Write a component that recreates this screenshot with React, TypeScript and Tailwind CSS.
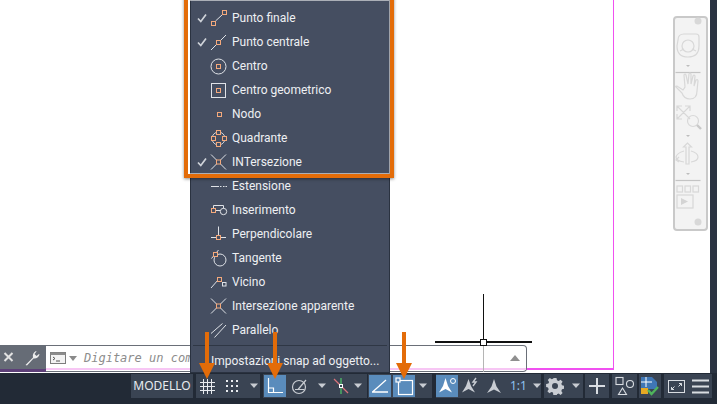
import React from 'react';

const white = '#dfe2e7';
const snap = '#f4a97c';

// small orange marker used by the snap icons
const Mark = ({ x, y, fill = 'none' }: { x: number; y: number; fill?: string }) => (
  <rect x={x} y={y} width="4" height="4" fill={fill} stroke={snap} />
);

const menuIcons: Record<string, React.ReactNode> = {
  endpoint: (
    <>
      <path d="M6.500 15 13.500 8.500" stroke={white} />
      <Mark x={2.5} y={15.5} />
      <Mark x={13.5} y={4.5} />
    </>
  ),
  midpoint: (
    <>
      <path d="M2 20 17 5" stroke={white} />
      <Mark x={7.5} y={10.5} fill="#454e61" />
    </>
  ),
  center: (
    <>
      <circle cx="9.500" cy="12.500" r="7.500" fill="none" stroke={white} />
      <Mark x={7.5} y={10.5} />
    </>
  ),
  centroid: (
    <>
      <rect x="2.500" y="5.500" width="14" height="14" fill="none" stroke={white} />
      <Mark x={7.5} y={10.5} />
    </>
  ),
  node: <Mark x={8.5} y={10.5} />,
  quadrant: (
    <>
      <circle cx="9.500" cy="12.500" r="6.500" fill="none" stroke="#c9ced6" />
      <Mark x={7.5} y={4.5} fill="#454e61" />
      <Mark x={7.5} y={16.5} fill="#454e61" />
      <Mark x={2.5} y={10.5} fill="#454e61" />
      <Mark x={13.5} y={10.5} fill="#454e61" />
    </>
  ),
  intersection: (
    <>
      <path d="M2 4.500 17 19.500M17 4.500 2 19.500" stroke={white} />
      <Mark x={7.5} y={10} fill="#454e61" />
    </>
  ),
  extension: (
    <path d="M2 12.500h8M11 12.500h1.500M14 12.500h1.500M16.500 12.500h1.500" stroke={white} />
  ),
  insertion: (
    <>
      <path d="M4.500 10.500V7.500h10v3M7 12.500h4" stroke={white} fill="none" />
      <circle cx="14.500" cy="13.500" r="3.200" fill="none" stroke={white} />
      <Mark x={2.5} y={10.5} fill="#454e61" />
    </>
  ),
  perpendicular: (
    <>
      <path d="M9.500 4.500V13M2 15.500h15" stroke={white} />
      <Mark x={7.5} y={13.5} fill="#454e61" />
    </>
  ),
  tangent: (
    <>
      <circle cx="11" cy="14" r="6" fill="none" stroke={white} />
      <path d="M2.500 12.500 9.500 4" stroke={white} />
      <Mark x={4.5} y={6.5} fill="#454e61" />
    </>
  ),
  nearest: (
    <>
      <path d="M2 18 9 10M12 11l2 2" stroke={white} />
      <Mark x={8.5} y={7.5} fill="#454e61" />
      <rect x="13.500" y="12.500" width="3.500" height="3.500" fill="none" stroke={white} />
    </>
  ),
  apparent: (
    <>
      <path d="M2 4.500 17 19.500M17 4.500 2 19.500" stroke={white} />
      <Mark x={7.5} y={10} fill="#454e61" />
    </>
  ),
  parallel: <path d="M2 15.500 13.500 5.500M5.500 19.500 17 7" stroke={white} />,
};

const menuRows = [
  { label: 'Punto finale', icon: 'endpoint', checked: true },
  { label: 'Punto centrale', icon: 'midpoint', checked: true },
  { label: 'Centro', icon: 'center' },
  { label: 'Centro geometrico', icon: 'centroid' },
  { label: 'Nodo', icon: 'node' },
  { label: 'Quadrante', icon: 'quadrant' },
  { label: 'INTersezione', icon: 'intersection', checked: true },
  { label: 'Estensione', icon: 'extension' },
  { label: 'Inserimento', icon: 'insertion' },
  { label: 'Perpendicolare', icon: 'perpendicular' },
  { label: 'Tangente', icon: 'tangent' },
  { label: 'Vicino', icon: 'nearest' },
  { label: 'Intersezione apparente', icon: 'apparent' },
  { label: 'Parallelo', icon: 'parallel' },
];

function Caret() {
  return (
    <svg width="10" height="6" viewBox="0 0 10 6">
      <path d="M1 0.500h8L5 5z" fill="#c8ccd2" />
    </svg>
  );
}

function SnapMenu() {
  return (
    <div className="absolute left-[190px] top-0 w-[200px] h-[373px] bg-[#454e61] border-x border-b border-[#2a3240] pt-[6px] flex flex-col font-['Roboto',sans-serif] text-[12px] text-[#eef0f3]">
      {menuRows.map((row) => (
        <div key={row.label} className="h-[24px] shrink-0 flex items-center">
          <div className="w-[18px] pl-[6px] shrink-0">
            {row.checked && (
              <svg width="10" height="10" viewBox="0 0 10 10">
                <path d="M1 5.500 3.800 8.500 9 1.500" fill="none" stroke="#cfd3d9" strokeWidth="1.700" />
              </svg>
            )}
          </div>
          <svg width="20" height="24" viewBox="0 0 20 24" className="shrink-0">
            {menuIcons[row.icon]}
          </svg>
          <span className="ml-[3px] whitespace-nowrap">{row.label}</span>
        </div>
      ))}
      <div className="mx-[2px] mt-[3px] border-t border-[#2f3745]" />
      <div className="pl-[20px] pt-[6px] whitespace-nowrap">Impostazioni snap ad oggetto...</div>
    </div>
  );
}

function Highlight() {
  return (
    <div className="absolute left-[184px] top-[-4px] w-[210px] h-[182px] border-4 border-[#e36c09] shadow-[0_1px_3px_rgba(0,0,0,0.45),inset_0_0_0_1px_rgba(255,255,255,0.55)]" />
  );
}

function OrangeArrow({ className }: { className: string }) {
  return (
    <svg width="16" height="48" viewBox="0 0 16 48" className={`absolute top-[332px] ${className}`}>
      <path d="M6 0h4v31h6L8 47 0 31h6z" fill="#e36c09" />
    </svg>
  );
}

function NavBar() {
  return (
    <div className="absolute left-[673px] top-[16px] w-[35px] h-[215px] rounded-[4px] bg-[#f3f3f3] border-2 border-[#c9c9c9]">
      <svg width="35" height="215" viewBox="2 2 35 215" fill="none" stroke="#d8d8d8" strokeWidth="1.200" className="block -mt-[2px] -ml-[2px]">
        <circle cx="27" cy="7" r="3.500" fill="#d8d8d8" stroke="none" />
        <path d="M7 26q0-6 6-6h12q3 0 3 3v9q0 11-11 11T6 32z" />
        <circle cx="17" cy="32" r="6" />
        <path d="M9 37l4-2M25 37l-4-2" />
        <path d="M15 51h4l-2 2z" fill="#bdbdbd" stroke="none" />
        <path d="M4.500 58.500h25" stroke="#c4c4c4" />
        <path d="M5 73l6 6q2 6 8 6 7 0 7-8l1-10q0-2-2-1l-2 6 1-10q-1-2-2 0l-2 8 0-10q-1-2-2 0l-1 10-2-9q-1-2-2 0l1 12-2 3-6-4q-2 0-1 1z" />
        <path d="M6 92l13 13M19 92 6 105M6 97v-5h5M19 97v-5h-5M6 100v5h5" />
        <circle cx="22" cy="107" r="5.500" />
        <path d="M26 111l4 4" strokeWidth="2.400" stroke="#c8c8c8" />
        <path d="M15 121h4l-2 2z" fill="#bdbdbd" stroke="none" />
        <path d="M15 150v-17h-2.500l4-4 4 4H18v17z" />
        <path d="M13 137q-7 2-8 6 0 4 8 5M20 137q7 2 7 6 0 4-7 5" />
        <path d="M8 143l-3 3 3 2" />
        <path d="M15 159h4l-2 2z" fill="#bdbdbd" stroke="none" />
        <path d="M4.500 166.500h25" stroke="#c4c4c4" />
        <rect x="6" y="172" width="5.500" height="6" />
        <rect x="14" y="172" width="5.500" height="6" />
        <rect x="22" y="172" width="5.500" height="6" />
        <rect x="6" y="181" width="16" height="13" />
        <path d="M10 184v7l7-3.500z" fill="#d4d4d4" stroke="none" />
        <circle cx="27" cy="208" r="3.500" fill="#d8d8d8" stroke="none" />
      </svg>
    </div>
  );
}

function CommandLine() {
  return (
    <div className="absolute left-0 bottom-[1px] w-[527px] h-[27px] flex">
      <div className="w-[46px] shrink-0 bg-[#666c76] border-b-[3px] border-[#5d3f78] flex items-start pt-[5px] pl-[3px] gap-[10px] text-[#e8e8e8]">
        <svg width="11" height="14" viewBox="0 0 11 14">
          <path d="M1.500 3l8 8M9.500 3l-8 8" stroke="#e2e2e2" strokeWidth="2" />
        </svg>
        <svg width="16" height="16" viewBox="0 0 16 16">
          <path d="M1.500 15 9 7.500Q8 3 12 1l.5.500-2 2.500 2 2 2.500-2 .5.500Q14 9 9.500 8.500L3 15.500z" fill="#eeeeee" />
        </svg>
      </div>
      <div className="flex-1 rounded-r-[4px] border-y border-r border-[#6a6f78] bg-white/70 relative flex items-start pt-[5px] pl-[4px]">
        <svg width="16" height="12" viewBox="0 0 16 12" className="mt-[1px]">
          <rect x="0.500" y="0.500" width="15" height="11" fill="#f3f3f3" stroke="#7d7d7d" />
          <rect x="0.500" y="0.500" width="15" height="2.500" fill="#8c8c8c" />
          <path d="M3 5l2 1.500L3 8M6 9h4" stroke="#555" fill="none" />
        </svg>
        <svg width="8" height="5" viewBox="0 0 8 5" className="mt-[5px] ml-[3px]">
          <path d="M0 0h8L4 5z" fill="#8a8a8a" />
        </svg>
        <span className="ml-[7px] font-['DejaVu_Sans_Mono',monospace] italic text-[12px] leading-[14px] text-[#8c8c8c] whitespace-nowrap">
          Digitare un comando
        </span>
        <svg width="10" height="6" viewBox="0 0 10 6" className="absolute right-[6px] top-[9px]">
          <path d="M5 0l5 6H0z" fill="#8f8f8f" />
        </svg>
        <div className="absolute left-0 right-0 bottom-[1px] h-[2px] bg-[#f7c6f4]" />
      </div>
    </div>
  );
}

function Group({ className, children }: { className: string; children?: React.ReactNode }) {
  return (
    <div className={`h-[24px] shrink-0 bg-[#3a4453] flex items-center ${className}`}>{children}</div>
  );
}

function Btn({ w, active, children }: { w: string; active?: boolean; children: React.ReactNode }) {
  return (
    <div className={`h-[22px] shrink-0 flex items-center justify-center ${w} ${active ? 'bg-[#5a8cbc]' : ''}`}>
      {children}
    </div>
  );
}

function StatusBar() {
  return (
    <div className="h-[31px] shrink-0 bg-[#222a36] flex items-start pt-[1px] pl-[131px] text-[#e8ebef]">
      <Group className="w-[62px] justify-center text-[12px]">MODELLO</Group>

      <Group className="w-[64px] ml-[3px] pl-[3px]">
        <svg width="17" height="17" viewBox="0 0 17 17" stroke="#e8ebef">
          <path d="M1 4.500h15M1 8.500h15M1 12.500h15M4.500 1v15M8.500 1v15M12.500 1v15" />
        </svg>
        <svg width="14" height="14" viewBox="0 0 14 14" fill="#e8ebef" className="ml-[9px]">
          <rect x="1" y="1" width="2" height="2" /><rect x="6" y="1" width="2" height="2" /><rect x="11" y="1" width="2" height="2" />
          <rect x="1" y="6" width="2" height="2" /><rect x="6" y="6" width="2" height="2" /><rect x="11" y="6" width="2" height="2" />
          <rect x="1" y="11" width="2" height="2" /><rect x="6" y="11" width="2" height="2" /><rect x="11" y="11" width="2" height="2" />
        </svg>
        <span className="ml-[10px]"><Caret /></span>
      </Group>

      <Group className="w-[104px] ml-[3px] pl-[1px]">
        <Btn w="w-[22px]" active>
          <svg width="18" height="18" viewBox="0 0 18 18" fill="none" stroke="#fff" strokeWidth="1.200">
            <path d="M2.500 1v14.500H17M2.500 11h5v4.500" />
          </svg>
        </Btn>
        <Btn w="w-[25px] ml-[1px]">
          <svg width="18" height="18" viewBox="0 0 18 18" fill="none" stroke="#c9cdd3" strokeWidth="1.200">
            <circle cx="8" cy="10" r="6.500" />
            <path d="M4 12.500h9M7 12.500 15 3" />
          </svg>
        </Btn>
        <span className="ml-[5px]"><Caret /></span>
        <Btn w="w-[20px] ml-[4px]">
          <svg width="16" height="18" viewBox="0 0 16 18" fill="none">
            <path d="M8 1v16" stroke="#4fc96b" strokeWidth="1.200" />
            <path d="M1 2l14 14" stroke="#d9737b" strokeWidth="1.200" />
            <rect x="6.500" y="7.500" width="3" height="3" fill="#3a4453" stroke="#fff" />
          </svg>
        </Btn>
        <span className="ml-[2px]"><Caret /></span>
      </Group>

      <Group className="w-[64px] ml-[1px] pl-[1px]">
        <Btn w="w-[22px]" active>
          <svg width="18" height="16" viewBox="0 0 18 16" fill="none" stroke="#fff" strokeWidth="1.300">
            <path d="M1 14h16M1.500 14 15 2" />
          </svg>
        </Btn>
        <Btn w="w-[22px] ml-[2px]" active>
          <svg width="19" height="19" viewBox="0 0 19 19" fill="none" stroke="#fff" strokeWidth="1.200">
            <rect x="3.500" y="3.500" width="14" height="14" />
            <rect x="1" y="1" width="4" height="4" fill="#5a8cbc" />
          </svg>
        </Btn>
        <span className="ml-[3px]"><Caret /></span>
      </Group>

      <Group className="w-[105px] ml-[4px]">
        <Btn w="w-[22px]" active>
          <svg width="19" height="18" viewBox="0 0 19 18">
            <path d="M7.500 1 10 9l4 6.500-6.500-3.500L1 15.500 5 9z" fill="#fff" />
            <circle cx="15" cy="4" r="2.500" fill="none" stroke="#fff" />
          </svg>
        </Btn>
        <Btn w="w-[24px]">
          <svg width="19" height="18" viewBox="0 0 19 18">
            <path d="M7.500 2 10 9l4 6.500-6.500-3.500L1 15.500 5 9z" fill="#c9cdd3" />
            <path d="M15 1l-3 4h3l-3 4" fill="none" stroke="#c9cdd3" strokeWidth="1.400" />
          </svg>
        </Btn>
        <Btn w="w-[24px]">
          <svg width="16" height="18" viewBox="0 0 16 18">
            <path d="M8 2l2.500 7.500L15 16l-7-3.500L1 16l4.500-6.500z" fill="#c9cdd3" />
          </svg>
        </Btn>
        <span className="ml-[4px] text-[12px] text-[#8fc1ee]">1:1</span>
        <span className="ml-[5px]"><Caret /></span>
      </Group>

      <Group className="w-[39px] ml-[3px] pl-[2px]">
        <svg width="18" height="18" viewBox="0 0 18 18" fill="#c9cdd3">
          <path fillRule="evenodd" d="M7.500 1h3l.5 2.300 1.600.7 2-1.300 2 2-1.300 2 .7 1.600 2.300.5v3l-2.300.5-.7 1.600 1.300 2-2 2-2-1.300-1.600.7-.5 2.300h-3L7 15.600l-1.600-.7-2 1.300-2-2 1.300-2-.7-1.600L.1 10.100v-3L2.400 6.600l.7-1.600-1.300-2 2-2 2 1.300L7.400 1.600zM9 6a3 3 0 1 0 0 6 3 3 0 0 0 0-6z" />
        </svg>
        <span className="ml-[7px]"><Caret /></span>
      </Group>

      <Group className="w-[24px] ml-[2px] justify-center">
        <svg width="16" height="16" viewBox="0 0 16 16" stroke="#d9dde2" strokeWidth="2">
          <path d="M8 0v16M0 8h16" />
        </svg>
      </Group>

      <Group className="w-[25px] ml-[3px] justify-center">
        <svg width="20" height="20" viewBox="0 0 20 20" fill="none" stroke="#d9dde2" strokeWidth="1.100">
          <rect x="1" y="1.500" width="7" height="7" />
          <circle cx="15" cy="8" r="3.500" />
          <path d="M7.500 12 11.500 18.500H3.500z" />
        </svg>
      </Group>

      <Group className="w-[22px] ml-[2px] justify-center">
        <svg width="20" height="20" viewBox="0 0 20 20">
          <path d="M1 1h11l5 5v7H1z" fill="#3f76b5" />
          <path d="M6 1v10M1 6h11" stroke="#fff" strokeWidth="1" />
          <rect x="1" y="12" width="7" height="6" fill="#e5a823" />
          <path d="M8 14l3.500 4L18 11" fill="none" stroke="#4fb45c" strokeWidth="2.400" />
        </svg>
      </Group>

      <Group className="w-[48px] ml-[3px] pl-[4px]">
        <svg width="17" height="13" viewBox="0 0 17 13" fill="none" stroke="#d9dde2">
          <rect x="0.500" y="0.500" width="16" height="12" />
          <path d="M3.500 9.500l3-3M3.500 7v2.500H6M13.500 3.500l-3 3M11 3.500h2.500V6" />
        </svg>
        <svg width="17" height="15" viewBox="0 0 17 15" stroke="#d9dde2" strokeWidth="2" className="ml-[7px]">
          <path d="M0 1.500h17M0 7.500h17M0 13.500h17" />
        </svg>
      </Group>
    </div>
  );
}

export default function App() {
  return (
    <div className="relative w-[717px] h-[404px] overflow-hidden flex flex-col bg-white font-['Noto_Sans',sans-serif]">
      <div className="flex-1 flex min-h-0">
        <div className="relative flex-1 bg-white">
          {/* paper border */}
          <div className="absolute left-0 top-0 w-[614px] h-[370px] border-r border-b-2 border-[#f050f0]" />
          {/* crosshair */}
          <div className="absolute left-[483px] top-[294px] w-[1px] h-[46px] bg-[#111]" />
          <div className="absolute left-[435px] top-[341px] w-[97px] h-[2px] bg-[#111]" />
          <NavBar />
          <CommandLine />
          <div className="absolute left-[483px] top-[345px] w-[1px] h-[27px] bg-[#b5b5b5]" />
          <div className="absolute left-[480px] top-[339px] w-[7px] h-[7px] bg-white border border-[#111]" />
        </div>
        <div className="w-[7px] shrink-0 bg-[#2b3442]" />
      </div>
      <StatusBar />
      <SnapMenu />
      <Highlight />
      <OrangeArrow className="left-[199px]" />
      <OrangeArrow className="left-[267px]" />
      <OrangeArrow className="left-[396px]" />
    </div>
  );
}
